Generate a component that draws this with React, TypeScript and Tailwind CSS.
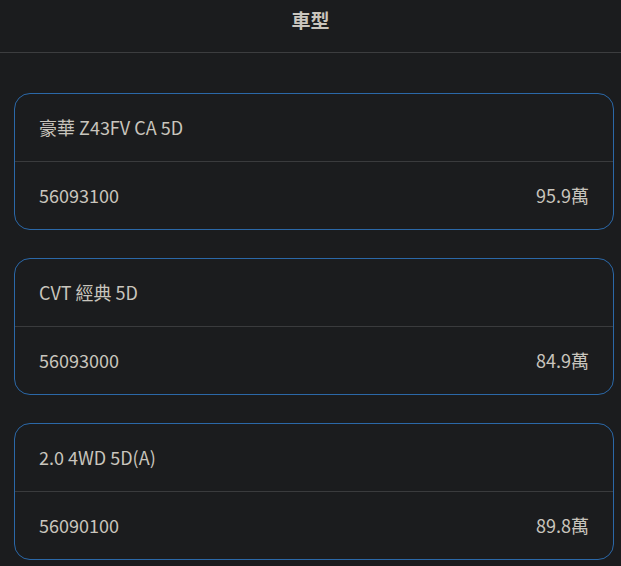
const cars = [
    {name: "豪華 Z43FV CA 5D", code: "56093100", price: "95.9萬"},
    {name: "CVT 經典 5D", code: "56093000", price: "84.9萬"},
    {name: "2.0 4WD 5D(A)", code: "56090100", price: "89.8萬"},
];

const App: React.FC = () => {
    return (
        <div
            className="min-h-[566px] bg-[#1b1c1e] text-[#c9c5bd]"
            style={{fontFamily: '"Noto Sans CJK TC", "Noto Sans", sans-serif'}}>
            <div className="flex h-[53px] items-start justify-center border-b border-[#3c3d3f] pt-[6px]">
                <div className="text-[19px] font-bold leading-[28px] text-[#c9c5bd]">車型</div>
            </div>
            <div className="flex flex-col gap-[28px] pl-[14px] pr-[7px] pt-[40px]">
                {cars.map((car) => (
                    <div key={car.code} className="rounded-[16px] border border-[#2b68a8]">
                        <div className="flex h-[67px] items-center px-[24px] text-[18px]">
                            {car.name}
                        </div>
                        <div className="h-px bg-[#3a3b3d]"></div>
                        <div className="flex h-[67px] items-center justify-between px-[24px] text-[18px]">
                            <span>{car.code}</span>
                            <span>{car.price}</span>
                        </div>
                    </div>
                ))}
            </div>
        </div>
    );
};

export default App;
